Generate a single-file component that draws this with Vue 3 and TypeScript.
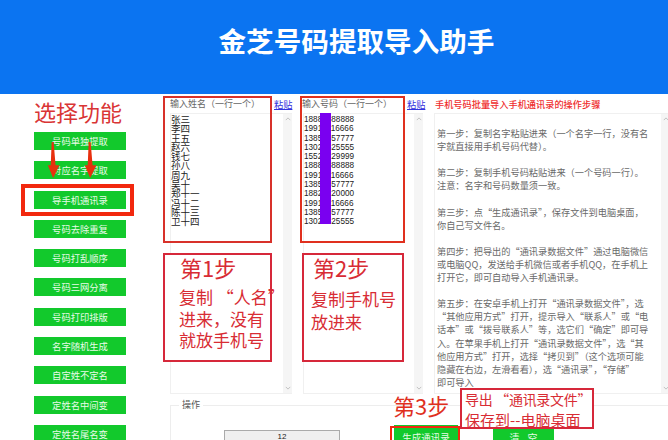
<script setup lang="ts">
const menu: string[] = ['号码单独提取', '对应名字提取', '导手机通讯录', '号码去除重复', '号码打乱顺序', '号码三网分离', '号码打印排版', '名字随机生成', '自定姓不定名', '定姓名中间变', '定姓名尾名变']
const names: string[] = ['张三', '李四', '王五', '赵六', '钱七', '孙八', '周九', '吴十', '郑十一', '冯十二', '陈十三', '卫十四']
const phones: string[] = ['18888888888', '19911016666', '13855557777', '13025525555', '15522229999', '18888888888', '19911016666', '13855557777', '18822220000', '19911016666', '13855557777', '13025525555']
const guide: string[] = [
  '第一步：复制名字粘贴进来（一个名字一行，没有名',
  '字就直接用手机号码代替）。',
  '',
  '第二步：复制手机号码粘贴进来（一个号码一行）。',
  '注意：名字和号码数量须一致。',
  '',
  '第三步：点“生成通讯录”，保存文件到电脑桌面，',
  '你自己写文件名。',
  '',
  '第四步：把导出的“通讯录数据文件”通过电脑微信',
  '或电脑QQ，发送给手机微信或者手机QQ，在手机上',
  '打开它，即可自动导入手机通讯录。',
  '',
  '第五步：在安卓手机上打开“通讯录数据文件”，选',
  '“其他应用方式”打开，提示导入“联系人”或“电',
  '话本”或“拨号联系人”等，选它们“确定”即可导',
  '入。在苹果手机上打开“通讯录数据文件”，选“其',
  '他应用方式”打开，选择“拷贝到”（这个选项可能',
  '隐藏在右边，左滑看看），选“通讯录”，“存储”',
  '即可导入',
]
</script>

<template>
  <div class="app">
    <header class="header"><h1>金芝号码提取导入助手</h1></header>
    <div class="body">
      <nav class="side">
        <button v-for="m in menu" :key="m" class="green side-btn">{{ m }}</button>
      </nav>
      <main class="main">
        <section class="columns">
          <div class="col col-name">
            <div class="col-head"><span>输入姓名（一行一个）</span><a class="paste">粘贴</a></div>
            <div class="box">
              <div class="lines names"><div v-for="n in names" :key="n">{{ n }}</div></div>
              <div class="scroll">
                <svg viewBox="0 0 8 5"><path d="M1 4l3-3 3 3" /></svg>
                <svg viewBox="0 0 8 5"><path d="M1 1l3 3 3-3" /></svg>
              </div>
            </div>
          </div>
          <div class="col col-phone">
            <div class="col-head"><span>输入号码（一行一个）</span><a class="paste">粘贴</a></div>
            <div class="box">
              <div class="lines phones"><div v-for="(p, i) in phones" :key="i">{{ p }}</div></div>
              <div class="scroll">
                <svg viewBox="0 0 8 5"><path d="M1 4l3-3 3 3" /></svg>
                <svg viewBox="0 0 8 5"><path d="M1 1l3 3 3-3" /></svg>
              </div>
            </div>
          </div>
          <div class="col col-guide">
            <div class="guide-head">手机号码批量导入手机通讯录的操作步骤</div>
            <div class="box">
              <div class="guide">
                <div v-for="(g, i) in guide" :key="i" class="guide-line">{{ g }}</div>
              </div>
              <div class="scroll">
                <svg viewBox="0 0 8 5"><path d="M1 4l3-3 3 3" /></svg>
                <svg viewBox="0 0 8 5"><path d="M1 1l3 3 3-3" /></svg>
              </div>
            </div>
          </div>
        </section>
        <fieldset class="ops">
          <legend>操作</legend>
          <div class="ops-row">
            <div class="count">12</div>
            <button class="green gen">生成通讯录</button>
            <button class="green clear">清 空</button>
          </div>
        </fieldset>
      </main>
    </div>

    <div class="marks">
      <div class="mark pick">选择功能</div>
      <svg class="mark arrows" viewBox="0 0 60 38">
        <path d="M4 0h2l2 24h4l-6.500 13L0 24h3z" />
        <path d="M42 0h2l2 24h4l-6.500 13L38 24h3z" />
      </svg>
      <div class="mark ring"></div>
      <div class="mark frame-name"></div>
      <div class="mark frame-phone"></div>
      <div class="mark purple"></div>
      <div class="mark note note1">
        <div class="big">第1步</div>
        <div>复制 “人名”</div>
        <div>进来，没有</div>
        <div>就放手机号</div>
      </div>
      <div class="mark note note2">
        <div class="big">第2步</div>
        <div>复制手机号</div>
        <div>放进来</div>
      </div>
      <div class="mark step3">第3步</div>
      <div class="mark export">
        <div class="export-top">导出 “通讯录文件”</div>
        <div>保存到--电脑桌面</div>
      </div>
      <div class="mark ring-gen"></div>
    </div>
  </div>
</template>

<style>
html, body { margin: 0; padding: 0; background: #fff; }
</style>

<style scoped>
.app {
  position: relative;
  width: 668px;
  height: 440px;
  overflow: hidden;
  background: #fff;
  font-family: "Noto Sans CJK SC", "Liberation Sans", sans-serif;
  color: #555;
}
.header {
  height: 94px;
  background: #0b74f1;
  display: flex;
  align-items: center;
  justify-content: center;
  padding: 0 0 14px 45px;
  box-sizing: border-box;
}
.header h1 {
  margin: 0;
  color: #fff;
  font-size: 27.600px;
  font-weight: 700;
  line-height: 34px;
}
.body { display: flex; height: 346px; }
.side {
  width: 170px;
  flex: none;
  box-sizing: border-box;
  padding: 38px 0 0 34px;
  display: flex;
  flex-direction: column;
  gap: 11.300px;
}
.green {
  border: 0;
  margin: 0;
  padding: 0;
  background: #12c92c;
  color: #e8fbe8;
  font-family: inherit;
  font-size: 9.300px;
  text-align: center;
}
.side-btn { width: 92px; height: 18px; flex: none; line-height: 18px; }
.main { flex: 1; min-width: 0; display: flex; flex-direction: column; }
.columns { display: flex; height: 300px; flex: none; }
.col { display: flex; flex-direction: column; }
.col-name { width: 133px; }
.col-phone { width: 130px; }
.col-guide { flex: 1; min-width: 0; }
.col-head {
  height: 19px;
  flex: none;
  display: flex;
  align-items: center;
  font-size: 9px;
  color: #666;
}
.col-name .col-head span { width: 104px; }
.col-phone .col-head span { width: 105px; margin-left: -1px; }
.paste { color: #3333dd; text-decoration: underline; font-size: 9.200px; white-space: nowrap; }
.guide-head {
  height: 19px;
  flex: none;
  display: flex;
  align-items: center;
  font-size: 9.200px;
  font-weight: 500;
  color: #ef2d2d;
  white-space: nowrap;
  padding-left: 2px;
}
.box {
  width: 122px;
  flex: 1;
  display: flex;
  box-sizing: border-box;
  border: 1px solid #f0f0f0;
  border-width: 1px 0 1px 1px;
}
.col-phone .box { width: 120px; }
.col-guide .box { width: 236px; margin-left: 1px; }
.lines { flex: 1; min-width: 0; line-height: 9.280px; padding-top: 1px; color: #222; }
.names { font-size: 9.500px; padding-left: 0; }
.phones { font-size: 8.200px; font-family: "Liberation Sans", sans-serif; padding-left: 0; }
.guide { flex: 1; min-width: 0; padding: 13px 0 0 2px; font-size: 9.200px; line-height: 13.100px; color: #6a6a6a; }
.guide-line { height: 13.100px; white-space: nowrap; }
.scroll {
  width: 9px;
  flex: none;
  background: #f5f5f5;
  display: flex;
  flex-direction: column;
  justify-content: space-between;
  align-items: center;
  padding: 3px 0;
}
.scroll svg { width: 6px; height: 4px; fill: none; stroke: #bbb; stroke-width: 1.200; }
.ops {
  margin: 5px 0 0;
  padding: 0;
  min-inline-size: 0;
  border: 1px solid #ededed;
  border-width: 1px 0 0 1px;
  height: 40px;
  box-sizing: content-box;
  font-size: 9px;
}
.ops legend { margin-left: 8px; padding: 0 3px; font-size: 9px; line-height: 12px; color: #555; }
.ops-row { display: flex; align-items: flex-start; padding-left: 53px; padding-top: 19px; }
.count {
  width: 114px;
  height: 20px;
  flex: none;
  border: 1px solid #aaa;
  background: #efefef;
  text-align: center;
  font-size: 8px;
  line-height: 12px;
  color: #222;
  font-family: "Liberation Sans", sans-serif;
}
.gen { width: 64px; height: 24px; margin: -5px 0 0 54px; flex: none; font-size: 9.500px; }
.clear { width: 61px; height: 24px; margin: -5px 0 0 35px; flex: none; font-size: 10px; word-spacing: 6px; }

.marks { position: absolute; inset: 0; pointer-events: none; }
.mark { position: absolute; box-sizing: border-box; }
.pick { left: 34px; top: 96px; font-size: 22px; line-height: 30px; color: #d93535; white-space: nowrap; }
.arrows { left: 47px; top: 142px; width: 60px; height: 37px; fill: #e8300f; }
.ring { left: 21px; top: 184px; width: 113px; height: 32px; border: 4px solid #f2280e; }
.frame-name { left: 163px; top: 96px; width: 109px; height: 147px; border: 2px solid #d8312a; }
.frame-phone { left: 300px; top: 96px; width: 105px; height: 147px; border: 2px solid #e0301e; }
.purple { left: 320px; top: 113px; width: 11px; height: 111px; background: #7a00f0; }
.note {
  top: 253px;
  height: 109px;
  background: #fff;
  border: 2px solid #d6283a;
  color: #d82c34;
  font-size: 17px;
  white-space: nowrap;
}
.note .big { font-size: 22px; line-height: 28px; margin-top: -2px; margin-bottom: 5px; }
.note1 { left: 163px; width: 109px; padding: 0 0 0 14px; line-height: 21.500px; }
.note1 .big { padding-left: 1px; }
.note2 { left: 302px; width: 102px; padding: 0 0 0 7px; line-height: 23px; }
.note2 .big { padding-left: 2px; margin-bottom: 6px; }
.step3 { left: 393px; top: 390px; font-size: 22px; line-height: 30px; color: #e0301e; white-space: nowrap; }
.export {
  left: 460px;
  top: 388px;
  width: 134px;
  height: 41px;
  background: #fff;
  border: 2px solid #d6283a;
  color: #d82c34;
  font-size: 15px;
  line-height: 19.500px;
  padding: 0 0 0 3px;
  white-space: nowrap;
}
.export-top { font-size: 14px; letter-spacing: -0.300px; }
.ring-gen { left: 390px; top: 426px; width: 70px; height: 30px; border: 2px solid #f2280e; }
</style>
